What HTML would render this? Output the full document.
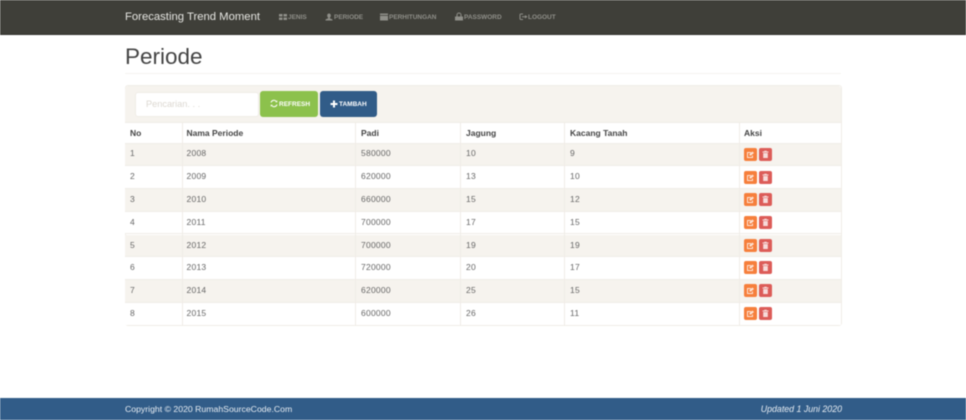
<!DOCTYPE html>
<html>
<head>
<meta charset="utf-8">
<style>
html,body{margin:0;padding:0;background:#fff;}
body{width:966px;height:420px;overflow:hidden;position:relative;font-family:"Liberation Sans",sans-serif;}
#w{position:absolute;left:0;top:0;width:966px;height:420px;overflow:hidden;filter:blur(.4px);}
.a{position:absolute;white-space:nowrap;}
.n{top:14px;font-size:6.5px;line-height:8px;color:#8f8f89;font-weight:bold;letter-spacing:-.02px;}
.i{position:absolute;top:12px;}
.row{position:absolute;left:125px;width:716px;border-bottom:1px solid #f0ede7;box-sizing:border-box;}
.c{position:absolute;font-size:8.5px;line-height:10px;color:#666;white-space:nowrap;letter-spacing:.25px;}
.h{font-weight:bold;color:#444;letter-spacing:0;}
.v{position:absolute;width:1px;top:123px;height:202px;background:#f0ede7;}
.b{position:absolute;width:13px;height:13px;border-radius:2px;}
.e{left:744px;background:#f67f3c;}
.d{left:759px;background:#dc5c58;}
.b svg{position:absolute;left:0;top:0;opacity:.78;}
</style>
</head>
<body>
<div id="w">
<div class="a" style="left:0;top:0;width:966px;height:35px;background:#3f3f39;border-bottom:1px solid #33332e;box-sizing:border-box;"></div>
<div class="a" style="left:125px;top:10px;font-size:11.300px;line-height:14px;color:#e6e6e2;">Forecasting Trend Moment</div>

<svg class="i" style="left:279px" width="8" height="10" viewBox="0 0 8 10"><path d="M0 2h3.500v2.500H0zM4.500 2H8v2.500H4.500zM0 5.500h3.500V8H0zM4.500 5.500H8V8H4.500z" fill="#8f8f89"/></svg>
<div class="a n" style="left:288px">JENIS</div>
<svg class="i" style="left:325px" width="8" height="10" viewBox="0 0 8 10"><path d="M4 1.500a1.800 1.800 0 0 1 1.800 2c0 1-.5 1.800-1 2.200v.5L7.500 7.500V8.500H.5V7.500L3.200 6.200v-.5c-.5-.4-1-1.200-1-2.200a1.800 1.800 0 0 1 1.800-2z" fill="#8f8f89"/></svg>
<div class="a n" style="left:334px">PERIODE</div>
<svg class="i" style="left:380px" width="8" height="10" viewBox="0 0 8 10"><path d="M0 1.500h8V3H0zM0 3.800h8v4.700H0z" fill="#8f8f89"/></svg>
<div class="a n" style="left:389px">PERHITUNGAN</div>
<svg class="i" style="left:455px" width="8" height="10" viewBox="0 0 8 10"><path d="M0 4.500h8v4H0z" fill="#8f8f89"/><path d="M2 4.500V3a2 2 0 0 1 4 0v1.500" fill="none" stroke="#8f8f89" stroke-width="1"/></svg>
<div class="a n" style="left:464px">PASSWORD</div>
<svg class="i" style="left:519px" width="9" height="10" viewBox="0 0 9 10"><path d="M4 2H2a1 1 0 0 0-1 1v3.500a1 1 0 0 0 1 1h2" fill="none" stroke="#8f8f89" stroke-width="1"/><path d="M3 4.300h3V3l2.500 1.800L6 6.500V5.300H3z" fill="#8f8f89"/></svg>
<div class="a n" style="left:528px">LOGOUT</div>

<div class="a" style="left:125px;top:44px;font-size:22.500px;line-height:26px;color:#444;">Periode</div>
<div class="a" style="left:125px;top:73px;width:716px;height:1px;background:#f5f4f0;"></div>

<div class="a" style="left:124.500px;top:85px;width:717px;height:240.500px;border:1px solid #f0ede7;border-radius:3px;box-sizing:border-box;background:#fff;"></div>
<div class="a" style="left:125px;top:86px;width:716px;height:37px;background:#f6f3ee;border-bottom:1px solid #f0ede7;box-sizing:border-box;border-radius:3px 3px 0 0;"></div>
<div class="a" style="left:135px;top:91.500px;width:123.500px;height:25px;background:#fff;border:1px solid #f0ece6;border-radius:3px;box-sizing:border-box;"></div>
<div class="a" style="left:146px;top:99px;font-size:9.200px;line-height:10px;color:#dcd8d1;">Pencarian. . .</div>
<div class="a" style="left:260px;top:91px;width:58px;height:26px;background:#8cc14c;border-radius:3px;"></div>
<svg class="a" style="left:270px;top:99px" width="8" height="9" viewBox="0 0 8 9"><path d="M1 3.500A3 3 0 0 1 6.300 2.500M7 5.500A3 3 0 0 1 1.700 6.500" fill="none" stroke="#fff" stroke-width="1"/><path d="M5.300 3.300L7.300 3.300V1.300zM2.700 5.700H.7V7.700z" fill="#fff"/></svg>
<div class="a" style="left:279px;top:100.500px;font-size:6.500px;line-height:8px;color:#fff;font-weight:bold;">REFRESH</div>
<div class="a" style="left:320px;top:91px;width:57px;height:26px;background:#315c88;border-radius:3px;"></div>
<svg class="a" style="left:330px;top:100px" width="8" height="8" viewBox="0 0 8 8"><path d="M3 .5h2v2.500h2.500v2H5v2.500H3V5H.5V3H3z" fill="#fff"/></svg>
<div class="a" style="left:339px;top:100.500px;font-size:6.500px;line-height:8px;color:#fff;font-weight:bold;">TAMBAH</div>

<div class="row" style="top:123px;height:20.500px;background:#fff;"></div>
<div class="row" style="top:143.500px;height:22.800px;background:#f6f3ee;"></div>
<div class="row" style="top:166.300px;height:22.800px;background:#fff;"></div>
<div class="row" style="top:189px;height:22.700px;background:#f6f3ee;"></div>
<div class="row" style="top:211.700px;height:22.800px;background:#fff;"></div>
<div class="row" style="top:234.500px;height:22.700px;background:#f6f3ee;"></div>
<div class="row" style="top:257.200px;height:22.800px;background:#fff;"></div>
<div class="row" style="top:280px;height:22.700px;background:#f6f3ee;"></div>
<div class="row" style="top:302.700px;height:22.300px;background:#fff;border-bottom:none;"></div>

<div class="v" style="left:182px"></div>
<div class="v" style="left:355px"></div>
<div class="v" style="left:460px"></div>
<div class="v" style="left:564px"></div>
<div class="v" style="left:738.500px"></div>

<div class="c h" style="left:130px;top:128px">No</div>
<div class="c h" style="left:186.500px;top:128px">Nama Periode</div>
<div class="c h" style="left:361px;top:128px">Padi</div>
<div class="c h" style="left:466px;top:128px">Jagung</div>
<div class="c h" style="left:570px;top:128px">Kacang Tanah</div>
<div class="c h" style="left:744px;top:128px">Aksi</div>

<div class="c" style="left:130px;top:148px">1</div><div class="c" style="left:186.500px;top:148px">2008</div><div class="c" style="left:361px;top:148px">580000</div><div class="c" style="left:466px;top:148px">10</div><div class="c" style="left:570px;top:148px">9</div>
<div class="c" style="left:130px;top:171px">2</div><div class="c" style="left:186.500px;top:171px">2009</div><div class="c" style="left:361px;top:171px">620000</div><div class="c" style="left:466px;top:171px">13</div><div class="c" style="left:570px;top:171px">10</div>
<div class="c" style="left:130px;top:193.500px">3</div><div class="c" style="left:186.500px;top:193.500px">2010</div><div class="c" style="left:361px;top:193.500px">660000</div><div class="c" style="left:466px;top:193.500px">15</div><div class="c" style="left:570px;top:193.500px">12</div>
<div class="c" style="left:130px;top:216.500px">4</div><div class="c" style="left:186.500px;top:216.500px">2011</div><div class="c" style="left:361px;top:216.500px">700000</div><div class="c" style="left:466px;top:216.500px">17</div><div class="c" style="left:570px;top:216.500px">15</div>
<div class="c" style="left:130px;top:239.500px">5</div><div class="c" style="left:186.500px;top:239.500px">2012</div><div class="c" style="left:361px;top:239.500px">700000</div><div class="c" style="left:466px;top:239.500px">19</div><div class="c" style="left:570px;top:239.500px">19</div>
<div class="c" style="left:130px;top:262px">6</div><div class="c" style="left:186.500px;top:262px">2013</div><div class="c" style="left:361px;top:262px">720000</div><div class="c" style="left:466px;top:262px">20</div><div class="c" style="left:570px;top:262px">17</div>
<div class="c" style="left:130px;top:285px">7</div><div class="c" style="left:186.500px;top:285px">2014</div><div class="c" style="left:361px;top:285px">620000</div><div class="c" style="left:466px;top:285px">25</div><div class="c" style="left:570px;top:285px">15</div>
<div class="c" style="left:130px;top:307.500px">8</div><div class="c" style="left:186.500px;top:307.500px">2015</div><div class="c" style="left:361px;top:307.500px">600000</div><div class="c" style="left:466px;top:307.500px">26</div><div class="c" style="left:570px;top:307.500px">11</div>

<svg width="0" height="0" style="position:absolute"><defs>
<g id="ed"><path d="M8.500 7.500V9.500H3.500V4.500H7" fill="none" stroke="#fff" stroke-width="1"/><path d="M5.500 7.500V6L8.500 3.500L10 5L7 7.500z" fill="#fff"/></g>
<g id="tr"><path d="M3.500 3.500H9.500V4.500H3.500zM5.200 2.700H7.800V3.500H5.200zM4.200 5H8.800V10H4.200z" fill="#fff"/></g>
</defs></svg>

<div class="b e" style="top:147.500px"><svg width="13" height="13"><use href="#ed"/></svg></div><div class="b d" style="top:147.500px"><svg width="13" height="13"><use href="#tr"/></svg></div>
<div class="b e" style="top:170.500px"><svg width="13" height="13"><use href="#ed"/></svg></div><div class="b d" style="top:170.500px"><svg width="13" height="13"><use href="#tr"/></svg></div>
<div class="b e" style="top:193px"><svg width="13" height="13"><use href="#ed"/></svg></div><div class="b d" style="top:193px"><svg width="13" height="13"><use href="#tr"/></svg></div>
<div class="b e" style="top:215.500px"><svg width="13" height="13"><use href="#ed"/></svg></div><div class="b d" style="top:215.500px"><svg width="13" height="13"><use href="#tr"/></svg></div>
<div class="b e" style="top:238.500px"><svg width="13" height="13"><use href="#ed"/></svg></div><div class="b d" style="top:238.500px"><svg width="13" height="13"><use href="#tr"/></svg></div>
<div class="b e" style="top:261px"><svg width="13" height="13"><use href="#ed"/></svg></div><div class="b d" style="top:261px"><svg width="13" height="13"><use href="#tr"/></svg></div>
<div class="b e" style="top:284px"><svg width="13" height="13"><use href="#ed"/></svg></div><div class="b d" style="top:284px"><svg width="13" height="13"><use href="#tr"/></svg></div>
<div class="b e" style="top:307px"><svg width="13" height="13"><use href="#ed"/></svg></div><div class="b d" style="top:307px"><svg width="13" height="13"><use href="#tr"/></svg></div>

<div class="a" style="left:0;top:398px;width:966px;height:22px;background:#315c88;"></div>
<div class="a" style="left:125px;top:404px;font-size:8.700px;line-height:10px;color:#e6ecf2;">Copyright © 2020 RumahSourceCode.Com</div>
<div class="a" style="right:124px;top:404px;font-size:8.800px;line-height:10px;color:#e6ecf2;font-style:italic;">Updated 1 Juni 2020</div>
</div>
</body>
</html>
